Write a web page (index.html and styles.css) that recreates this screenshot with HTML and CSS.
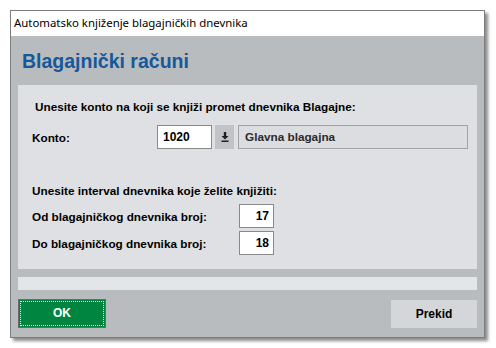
FILE: index.html
```html
<!DOCTYPE html>
<html lang="hr">
<head>
    <meta charset="UTF-8">
    <title>Automatsko knjiženje blagajničkih dnevnika</title>
    <link rel="stylesheet" href="styles.css">
</head>
<body>
    <div class="window">
        <div class="titlebar">Automatsko knjiženje blagajničkih dnevnika</div>
        <div class="content">
            <h2>Blagajnički računi</h2>
            <div class="panel">
                <p class="note">Unesite konto na koji se knjiži promet dnevnika Blagajne:</p>
                <div class="row">
                    <label class="lbl-konto">Konto:</label>
                    <input class="konto" type="text" value="1020">
                    <button class="pick">
                        <svg width="8" height="10" viewBox="0 0 8 10">
                            <path d="M2.8 0h2.4v4h2.3L4 7.6 0.5 4h2.3z" fill="#1e1e1e"/>
                            <rect x="0.5" y="8.5" width="7" height="1.5" fill="#1e1e1e"/>
                        </svg>
                    </button>
                    <div class="name">Glavna blagajna</div>
                </div>
                <p class="note second">Unesite interval dnevnika koje želite knjižiti:</p>
                <div class="row">
                    <label class="lbl-num">Od blagajničkog dnevnika broj:</label>
                    <input class="num" type="text" value="17">
                </div>
                <div class="row next">
                    <label class="lbl-num">Do blagajničkog dnevnika broj:</label>
                    <input class="num" type="text" value="18">
                </div>
            </div>
            <div class="progress"></div>
            <div class="buttons">
                <button class="ok"><span>OK</span></button>
                <button class="cancel">Prekid</button>
            </div>
        </div>
    </div>
</body>
</html>
```
FILE: styles.css
```css
body {
    margin: 0;
    background: #fff;
    font-family: "Liberation Sans", Arial, sans-serif;
}
.window {
    margin: 10px;
    width: 473px;
    height: 326px;
    border: 1px solid #7c7c7c;
    box-shadow: 3px 3px 3px rgba(0,0,0,0.45);
    display: flex;
    flex-direction: column;
}
.titlebar {
    height: 25px;
    line-height: 24px;
    padding-left: 3px;
    background: #fff;
    font-family: "Noto Sans", sans-serif;
    font-size: 11.4px;
    color: #000;
}
.content {
    flex: 1;
    background: #b9bcbf;
    padding: 0 7px;
    display: flex;
    flex-direction: column;
}
h2 {
    margin: 0;
    height: 49px;
    line-height: 50px;
    padding-left: 4px;
    font-size: 19.5px;
    color: #16589a;
}
.panel {
    background: #dfe0e3;
    height: 184px;
    box-sizing: border-box;
    padding: 15px 0 0 14px;
}
.note {
    margin: 0;
    font-size: 11.75px;
    font-weight: bold;
    line-height: 14px;
    color: #000;
    padding-left: 3px;
}
.note.second {
    margin-top: 35px;
    padding-left: 0;
}
.row {
    display: flex;
    align-items: center;
    height: 24px;
    margin-top: 11px;
    font-size: 11.75px;
    font-weight: bold;
}
.row.next {
    margin-top: 3px;
}
.note.second + .row {
    margin-top: 6px;
}
.lbl-konto {
    width: 125px;
}
.lbl-num {
    width: 207px;
}
input {
    box-sizing: border-box;
    height: 24px;
    border: 1px solid #8a8a8a;
    background: #fff;
    font-family: "Liberation Sans", Arial, sans-serif;
    font-size: 12px;
    font-weight: bold;
    color: #000;
    outline: none;
}
.konto {
    width: 55px;
    padding: 0 5px;
}
.num {
    width: 35px;
    padding: 0 4px;
    text-align: right;
}
.pick {
    width: 19px;
    height: 24px;
    margin-left: 3px;
    padding: 0;
    border: none;
    background: #c1c3c6;
    display: flex;
    align-items: center;
    justify-content: center;
}
.name {
    box-sizing: border-box;
    width: 230px;
    height: 24px;
    margin-left: 4px;
    padding-left: 6px;
    line-height: 22px;
    border: 1px solid #a3a3a3;
    background: #dcdde0;
    color: #2b2b2b;
}
.progress {
    height: 13px;
    margin-top: 8px;
    background: #e4e5e6;
}
.buttons {
    display: flex;
    justify-content: space-between;
    margin-top: 9px;
}
button {
    font-family: "Liberation Sans", Arial, sans-serif;
    font-size: 12px;
    font-weight: bold;
}
.ok {
    width: 88px;
    height: 29px;
    padding: 1px;
    border: 1px solid #6a6a6a;
    background: #008541;
}
.ok span {
    display: block;
    height: 100%;
    box-sizing: border-box;
    border: 1px dotted #fff;
    line-height: 23px;
    color: #fff;
}
.cancel {
    width: 86px;
    height: 28px;
    margin-top: 1px;
    border: none;
    background: #d4d6d9;
    color: #000;
}
```
